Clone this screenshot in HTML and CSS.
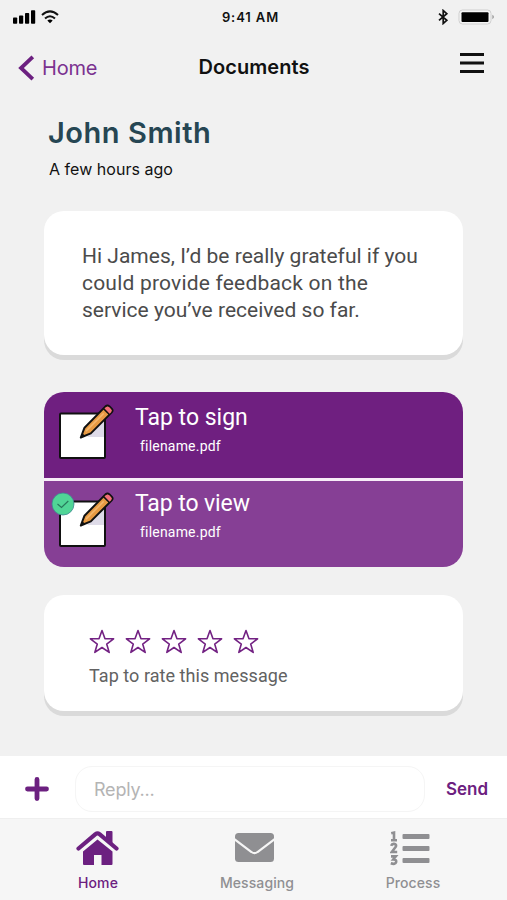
FILE: index.html
```html
<!DOCTYPE html>
<html lang="en">
<head>
<meta charset="utf-8">
<title>Documents</title>
<link rel="stylesheet" href="styles.css">
</head>
<body>
<svg class="defs" width="0" height="0" aria-hidden="true">
  <defs>
    <symbol id="star" viewBox="0 0 26 25"><path d="M13 1.5 L15.9 9.6 L24.6 9.8 L17.7 15.1 L20.2 23.4 L13 18.5 L5.8 23.4 L8.3 15.1 L1.4 9.8 L10.1 9.6 Z" fill="none" stroke="#732283" stroke-width="1.6" stroke-linejoin="round"/></symbol>
    <symbol id="note" viewBox="0 0 58 58">
      <rect x="2" y="9.5" width="45" height="44.5" rx="1" fill="#fff" stroke="#111" stroke-width="2"/>
      <path d="M29 33 L46 17 V33 Z" fill="#dedbe8"/>
      <path d="M22.8 33.5 L26.5 23.7 L47.5 2.4 Q49.5 .8 51.5 2.5 L53.7 4.7 Q55.4 6.5 53.7 8.4 L32.8 29.4 Z" fill="#e79a43" stroke="#111" stroke-width="2" stroke-linejoin="round"/>
      <path d="M46.3 4.8 L48.2 2.9 Q49.7 1.8 51 3.1 L53.2 5.3 Q54.4 6.8 53.1 8.2 L51.4 10 Z" fill="#f46f78"/>
      <path d="M45.5 4.6 L51.6 10.7" stroke="#111" stroke-width="1.5"/>
      <path d="M28 27.1 L45.7 9.4" stroke="#f4b66d" stroke-width="1.5"/>
      <path d="M22.8 33.5 L24.3 29.2 L27.2 31.8 Z" fill="#111"/>
    </symbol>
  </defs>
</svg>
<div class="screen">
  <header class="status">
    <svg class="signal" width="48" height="16" viewBox="0 0 48 16">
      <rect y="8.5" width="4.2" height="6.3" rx=".8"/><rect x="6" y="6.5" width="4.2" height="8.3" rx=".8"/><rect x="12" y="4" width="4.2" height="10.8" rx=".8"/><rect x="18" y="1.3" width="4.2" height="13.5" rx=".8"/>
      <path d="M29 6 Q37 -1.2 45 6 M32 9.5 Q37 4.9 42 9.5" fill="none" stroke="#111" stroke-width="2"/>
      <path d="M34.3 11.5 Q37 9.5 39.7 11.5 L37 14.2 Z"/>
    </svg>
    <span class="time">9:41 AM</span>
    <svg class="power" width="56" height="16" viewBox="0 0 56 16">
      <path d="M1 4.7 L8.8 11.3 L5.2 14.5 V1.5 L8.8 4.7 L1 11.3" fill="none" stroke="#111" stroke-width="1.7"/>
      <rect x="21" y="1" width="32" height="14" rx="3.5" fill="#f5f5f5" stroke="#cfcfcf"/>
      <rect x="23.5" y="3.3" width="27" height="9.6" rx="1"/>
      <path d="M54.4 5.8 Q57.5 8 54.4 10.2 Z" fill="#999"/>
    </svg>
  </header>
  <nav class="nav">
    <a class="back"><svg width="17" height="26" viewBox="0 0 17 26"><path d="M14.8 1.8 L3 13 L14.8 24.2" fill="none" stroke="#6c2080" stroke-width="3.8"/></svg><span>Home</span></a>
    <h1 class="title">Documents</h1>
    <svg class="menu" width="24" height="21" viewBox="0 0 24 21"><path d="M0 2.5H24M0 11H24M0 19.5H24" stroke="#111" stroke-width="2.8"/></svg>
  </nav>
  <main class="content">
    <h2 class="name">John Smith</h2>
    <p class="ago">A few hours ago</p>
    <section class="card message">
      <p><span class="l1">Hi James, I’d be really grateful if you</span><br><span class="l2">could provide feedback on the</span><br><span class="l3">service you’ve received so far.</span></p>
    </section>
    <section class="docs">
      <div class="doc">
        <div class="thumb"><svg width="58" height="58"><use href="#note"/></svg></div>
        <div class="info"><div class="action">Tap to sign</div><div class="file">filename.pdf</div></div>
      </div>
      <div class="doc viewed">
        <div class="thumb"><svg width="58" height="58"><use href="#note"/></svg>
          <svg class="badge" width="24" height="24" viewBox="0 0 24 24"><circle cx="12" cy="12" r="11" fill="#50d596" stroke="#3f8792" stroke-width=".8"/><path d="M6.5 12 L10.5 15.5 L17.3 9" fill="none" stroke="#28795c" stroke-width="1.2"/></svg>
        </div>
        <div class="info"><div class="action view">Tap to view</div><div class="file">filename.pdf</div></div>
      </div>
    </section>
    <section class="card rating">
      <div class="stars"><svg><use href="#star"/></svg><svg><use href="#star"/></svg><svg><use href="#star"/></svg><svg><use href="#star"/></svg><svg><use href="#star"/></svg></div>
      <p class="hint">Tap to rate this message</p>
    </section>
  </main>
  <div class="reply">
    <svg class="plus" width="24" height="24" viewBox="0 0 24 24"><path d="M12 2.5V21.5M2.5 12H21.5" stroke="#6c2080" stroke-width="4.8" stroke-linecap="round"/></svg>
    <div class="field">Reply...</div>
    <span class="send">Send</span>
  </div>
  <footer class="tabs">
    <div class="tab home">
      <svg width="44" height="36" viewBox="0 0 44 36" fill="#6c2080"><path d="M30 10V1Q30 0 31 0H35.5Q36.5 0 36.5 1V14Z"/><path d="M2.5 17.5 L19.5 3.2 Q21.5 1.6 23.5 3.2 L40.5 17.5" fill="none" stroke="#6c2080" stroke-width="4.2" stroke-linecap="round" stroke-linejoin="round"/><path d="M7 20.5 L21.5 8.5 L36.5 20.5 V33 Q36.5 34 35.5 34 H25.5 V24 H18 V34 H8 Q7 34 7 33Z"/></svg>
      <span>Home</span>
    </div>
    <div class="tab messaging">
      <svg width="39" height="29" viewBox="0 0 39 29"><rect width="39" height="29" rx="3.5" fill="#8f8f92"/><path d="M-1 6 L16.5 19 Q19.5 21.4 22.5 19 L40 6" fill="none" stroke="#f6f6f6" stroke-width="2.2"/></svg>
      <span>Messaging</span>
    </div>
    <div class="tab process">
      <svg width="40" height="36" viewBox="0 0 40 36"><g fill="none" stroke="#8f8f92" stroke-width="2.6"><path d="M1.2 3.3 L4 2.6 V10 M1 10.3H7"/><path d="M1.2 15.9 Q1.8 13.7 4 13.9 Q6.8 14.2 5.8 16.7 L1.8 22 H7.2"/><path d="M1 26.4H5.8L3.3 29.5 Q6.5 29.5 6.2 31.9 Q5.4 34.9 .8 33.3"/></g><g fill="#8f8f92"><rect x="12.5" y="4" width="27" height="5" rx="1"/><rect x="12.5" y="16" width="27" height="5" rx="1"/><rect x="12.5" y="28" width="27" height="5" rx="1"/></g></svg>
      <span>Process</span>
    </div>
  </footer>
</div>
</body>
</html>
```
FILE: styles.css
```css
* { box-sizing: border-box; }
body { margin: 0; font-family: Inter, sans-serif; color: #111; }
h1, h2, p { margin: 0; font-weight: 400; }
svg { display: block; flex: none; }
.defs { position: absolute; }
.screen { width: 507px; height: 900px; background: #f1f1f1; display: flex; flex-direction: column; overflow: hidden; }
.status { height: 34px; display: grid; grid-template-columns: 1fr auto 1fr; padding: 9px 13px 0; }
.time { font-size: 13px; line-height: 17px; font-weight: 600; letter-spacing: .95px; margin-left: 12px; margin-right: 18px; white-space: nowrap; letter-spacing: .9px; }
.power { justify-self: end; }
.nav { height: 68px; display: grid; grid-template-columns: 1fr auto 1fr; padding: 0 23px 0 18px; }
.back { display: flex; gap: 7px; padding-top: 21px; color: #7b3290; font-size: 20px; line-height: 26px; letter-spacing: -.2px; }
.title { font-size: 20px; line-height: 26px; font-weight: 600; letter-spacing: .05px; padding-top: 20px; margin-left: 6px; }
.menu { justify-self: end; margin-top: 18px; }
.content { flex: 1; padding: 0 44px; }
.name { font-size: 29px; line-height: 36px; font-weight: 600; color: #264653; margin: 13px 0 0 4px; letter-spacing: .55px; }
.ago { font-size: 16px; line-height: 20px; margin: 8px 0 0 5px; letter-spacing: .03px; }
.card { width: 419px; background: #fff; border-radius: 20px; box-shadow: 0 5px 0 #dadada; }
.message { height: 144px; margin-top: 32px; padding: 32px 0 0 38px; font-family: Roboto, sans-serif; font-size: 21px; line-height: 27px; color: #4b4b4b; white-space: nowrap; }
.l1, .l3 { letter-spacing: .01px; }
.l2 { letter-spacing: .2px; }
.docs { width: 419px; margin-top: 37px; border-radius: 20px; overflow: hidden; color: #fff; background: #f7ecf8; display: grid; gap: 3px; }
.doc { height: 86px; background: #6f1f80; display: flex; padding: 12px 0 0 14px; }
.viewed { background: #863f95; padding-top: 11px; }
.thumb { position: relative; width: 58px; height: 58px; }
.badge { position: absolute; left: -7px; top: 0; }
.info { margin-left: 19px; font-family: Roboto, sans-serif; }
.viewed .info { margin-top: -2px; }
.action { font-size: 23px; line-height: 27px; letter-spacing: 0; }
.view { letter-spacing: -.1px; }
.file { font-size: 14px; line-height: 18px; margin: 6px 0 0 5px; letter-spacing: .2px; }
.rating { height: 116px; margin-top: 28px; padding: 34px 0 0 45px; }
.stars { display: flex; gap: 10px; }
.stars svg { width: 26px; height: 25px; }
.hint { font-family: Roboto, sans-serif; font-size: 18px; line-height: 24px; color: #626262; margin-top: 10px; letter-spacing: .05px; }
.reply { height: 62px; background: #fff; display: flex; align-items: center; padding: 4px 19px 0 25px; }
.field { width: 350px; height: 46px; margin: 0 0 0 26px; border: 1px solid #f5f5f5; border-radius: 17px; padding-left: 18px; font-size: 18px; line-height: 46px; color: #b4b4b4; letter-spacing: -.2px; }
.send { margin-left: auto; color: #6c2080; font-size: 17px; font-weight: 600; }
.tabs { height: 82px; background: #f6f6f6; border-top: 1px solid #efefef; display: flex; }
.tab { display: flex; flex-direction: column; align-items: center; color: #8f8f92; font-size: 14px; font-weight: 500; line-height: 18px; letter-spacing: .1px; }
.tab span { margin-top: auto; margin-bottom: 8px; }
.home { width: 98px; margin-left: 49px; color: #6c2080; padding-top: 12px; }
.home svg { margin-right: 1px; }
.messaging { width: 100px; margin-left: 60px; padding-top: 14px; }
.messaging svg { margin-right: 6px; }
.process { width: 80px; margin-left: 66px; padding-top: 11px; }
.process svg { margin-right: 7px; }
```
